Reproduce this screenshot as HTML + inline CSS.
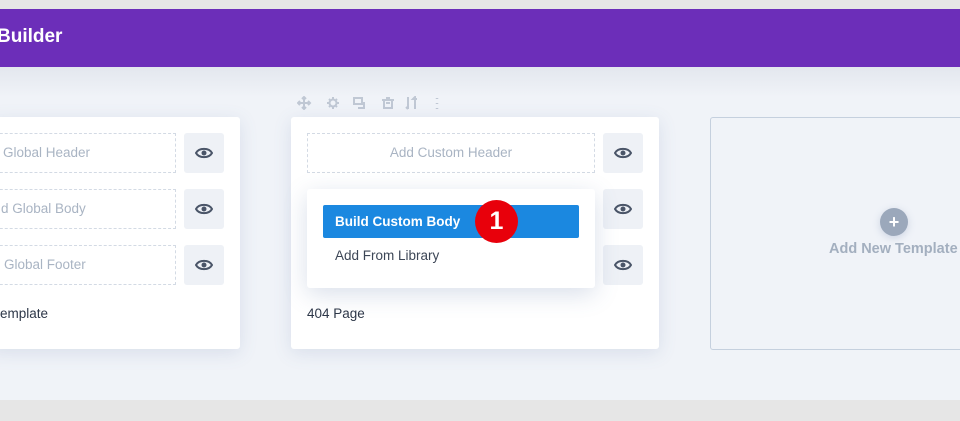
<!DOCTYPE html>
<html><head><style>
*{margin:0;padding:0;box-sizing:border-box}
body{width:960px;height:421px;overflow:hidden;background:#e6e6e6;font-family:"Liberation Sans",sans-serif;position:relative}
.top{position:absolute;left:-3px;top:9px;width:963px;height:58px;background:#6c2eb9;color:#fff;font-size:19px;font-weight:bold;line-height:56px}
.main{position:absolute;left:0;top:67px;width:960px;height:333px;background:linear-gradient(#e3e7ee,#f0f3f8 30px)}
.card{position:absolute;top:117px;height:232px;background:#fff;border-radius:3px;box-shadow:0 4px 18px rgba(80,110,160,.15)}
.dash{position:absolute;height:40px;border:1px dashed #d3dae4;color:#a9b4c3;font-size:13.5px;line-height:38px;text-align:center}
.eye{position:absolute;width:40px;height:40px;background:#eef1f6;border-radius:3px}
.eye svg{position:absolute;left:11px;top:13px}
.lbl{position:absolute;font-size:13.5px;color:#2d3748}
.tb{position:absolute;top:96px}
</style></head><body>
<div class="top">Builder</div>
<div class="main"></div>
<div class="card" style="left:-10px;width:250px"></div>
<div class="dash" style="left:-20px;top:133px;width:196px;text-align:left;padding-left:22px">Global Header</div>
<div class="dash" style="left:-20px;top:189px;width:196px;text-align:left;padding-left:20px">d Global Body</div>
<div class="dash" style="left:-20px;top:245px;width:196px;text-align:left;padding-left:23px">Global Footer</div>
<div class="eye" style="left:184px;top:133px"><svg width="18" height="14" viewBox="0 0 18 14"><path d="M1 7C4 1.5 14 1.5 17 7C14 12.5 4 12.5 1 7Z" fill="none" stroke="#4a5568" stroke-width="2"/><circle cx="9" cy="7" r="2.5" fill="#4a5568"/></svg></div>
<div class="eye" style="left:184px;top:189px"><svg width="18" height="14" viewBox="0 0 18 14"><path d="M1 7C4 1.5 14 1.5 17 7C14 12.5 4 12.5 1 7Z" fill="none" stroke="#4a5568" stroke-width="2"/><circle cx="9" cy="7" r="2.5" fill="#4a5568"/></svg></div>
<div class="eye" style="left:184px;top:245px"><svg width="18" height="14" viewBox="0 0 18 14"><path d="M1 7C4 1.5 14 1.5 17 7C14 12.5 4 12.5 1 7Z" fill="none" stroke="#4a5568" stroke-width="2"/><circle cx="9" cy="7" r="2.5" fill="#4a5568"/></svg></div>
<div class="lbl" style="left:0;top:306px">emplate</div>
<svg class="tb" style="left:297px" width="150" height="14" viewBox="0 0 150 14" fill="none" stroke="#c0c8d4" stroke-width="2">
<path d="M7 1V13M1 7H13M5 3L7 1L9 3M5 11L7 13L9 11M3 5L1 7L3 9M11 5L13 7L11 9"/>
<circle cx="36" cy="7" r="3.5"/><path d="M36 1V3M36 11V13M30 7H32M40 7H42M32 3L33 4M39 10L40 11M32 11L33 10M39 4L40 3"/>
<path d="M57 2H65V8H57ZM67 6V12H61"/>
<path d="M85 4H97M87 4V12H95V4M89 2H93M89 7H93"/>
<path d="M111 1V13M109 11L111 13M118 13V1L116 3L120 3"/>
<path d="M140 2V3M140 7V8M140 12V13" stroke-width="2.5"/>
</svg>
<div class="card" style="left:291px;width:368px"></div>
<div class="dash" style="left:307px;top:133px;width:288px">Add Custom Header</div>
<div class="eye" style="left:603px;top:133px"><svg width="18" height="14" viewBox="0 0 18 14"><path d="M1 7C4 1.5 14 1.5 17 7C14 12.5 4 12.5 1 7Z" fill="none" stroke="#4a5568" stroke-width="2"/><circle cx="9" cy="7" r="2.5" fill="#4a5568"/></svg></div>
<div class="eye" style="left:603px;top:189px"><svg width="18" height="14" viewBox="0 0 18 14"><path d="M1 7C4 1.5 14 1.5 17 7C14 12.5 4 12.5 1 7Z" fill="none" stroke="#4a5568" stroke-width="2"/><circle cx="9" cy="7" r="2.5" fill="#4a5568"/></svg></div>
<div class="eye" style="left:603px;top:245px"><svg width="18" height="14" viewBox="0 0 18 14"><path d="M1 7C4 1.5 14 1.5 17 7C14 12.5 4 12.5 1 7Z" fill="none" stroke="#4a5568" stroke-width="2"/><circle cx="9" cy="7" r="2.5" fill="#4a5568"/></svg></div>
<div style="position:absolute;left:307px;top:189px;width:288px;height:99px;background:#fff;border-radius:3px;box-shadow:0 6px 24px rgba(80,110,160,.22)"></div>
<div style="position:absolute;left:323px;top:205px;width:256px;height:33px;background:#1b88e0;border-radius:2px;color:#fff;font-size:13.5px;font-weight:bold;line-height:33px;padding-left:12px">Build Custom Body</div>
<div style="position:absolute;left:475px;top:200px;width:43px;height:43px;border-radius:50%;background:#e8000b;color:#fff;font-size:25px;font-weight:bold;text-align:center;line-height:43px">1</div>
<div class="lbl" style="left:335px;top:248px;color:#3c4656">Add From Library</div>
<div class="lbl" style="left:307px;top:306px">404 Page</div>
<div style="position:absolute;left:710px;top:117px;width:270px;height:233px;border:1px solid #c5d0de;border-radius:3px"></div>
<div style="position:absolute;left:880px;top:208px;width:28px;height:28px;border-radius:50%;background:#9ba8bb;color:#fff;font-size:18px;font-weight:bold;text-align:center;line-height:28px;box-shadow:0 2px 8px rgba(120,140,180,.3)">+</div>
<div style="position:absolute;left:829px;top:241px;color:#a3afbf;font-size:14.5px;font-weight:bold;white-space:nowrap">Add New Template</div>
</body></html>
